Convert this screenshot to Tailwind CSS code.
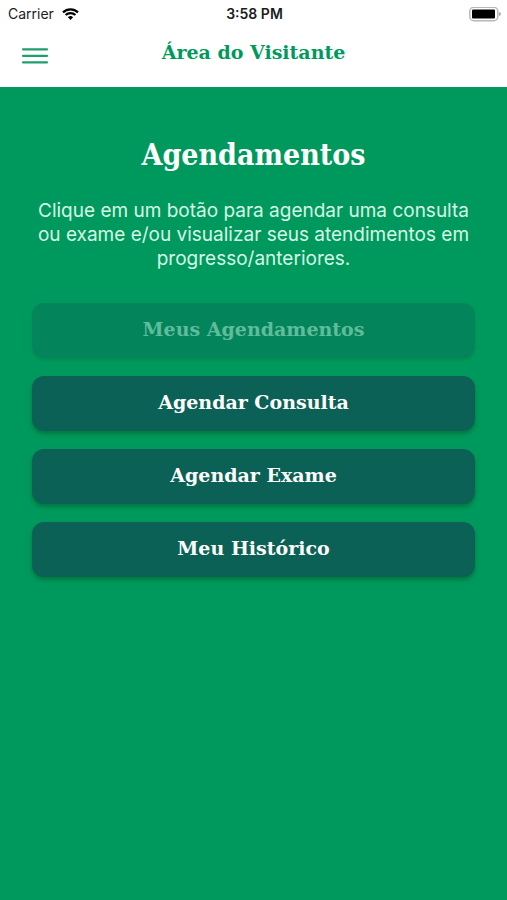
<!DOCTYPE html>
<html lang="pt-BR">
  <head>
    <title>Área do Visitante</title>
    <meta charset="UTF-8" />
    <meta name="viewport" content="width=device-width, initial-scale=1" />
    <script src="https://cdn.jsdelivr.net/npm/@tailwindcss/browser@4"></script>
  </head>
  <body class="min-h-screen flex flex-col bg-[#00995d] font-['Inter','Liberation_Sans',sans-serif]">
    <header class="bg-white h-[87px]">
      <!-- Status bar -->
      <div class="grid grid-cols-3 items-center h-7 pl-2 pr-1.5 text-[#1c1c1c]">
        <div class="flex items-center gap-2 text-sm">
          <span>Carrier</span>
          <svg class="w-[17px] h-3" viewBox="0 0 17 12" fill="none" stroke="#000" stroke-width="2.2">
            <path d="M1 4.4a10.6 10.6 0 0 1 15 0" />
            <path d="M3.6 7.1a6.9 6.9 0 0 1 9.8 0" />
            <path d="M8.5 12L5.9 9.3a3.7 3.7 0 0 1 5.2 0z" fill="#000" stroke="none" />
          </svg>
        </div>
        <span class="text-sm font-semibold text-center">3:58 PM</span>
        <svg class="w-8 h-[15px] justify-self-end" viewBox="0 0 32 15">
          <rect x="0.8" y="0.3" width="28" height="13.4" rx="4" fill="#fff" stroke="#b8b8b8" stroke-width="1.5" />
          <rect x="3" y="2.5" width="23" height="9" rx="1" fill="#000" />
          <path d="M30.4 5c1.6.6 1.6 3.4 0 4z" fill="#777" />
        </svg>
      </div>
      <!-- Nav bar -->
      <div class="grid grid-cols-[1fr_auto_1fr] items-start px-[22px]">
        <button type="button" aria-label="Menu" class="justify-self-start mt-5">
          <svg class="w-[26px] h-4" viewBox="0 0 26 16" stroke="#1f9f6f" stroke-width="2.2" stroke-linecap="round">
            <path d="M1 1.3h24M1 7.8h24M1 14.3h24" />
          </svg>
        </button>
        <h1 class="mt-3 text-[19px] leading-6 font-bold text-[#00995d] font-['DejaVu_Serif',serif]">Área do Visitante</h1>
      </div>
    </header>

    <main class="flex-1 px-8 pt-12 text-center">
      <h2 class="text-[30px] leading-10 font-bold text-white font-['DejaVu_Serif_Condensed','DejaVu_Serif',serif]">Agendamentos</h2>
      <p class="mt-6 text-[19px] leading-6 text-[#d5f7e6]">Clique em um botão para agendar uma consulta ou exame e/ou visualizar seus atendimentos em progresso/anteriores.</p>
      <div class="mt-8 flex flex-col gap-[18px] text-[19px] font-bold text-white font-['DejaVu_Serif',serif]">
        <button type="button" disabled class="h-[55px] pb-0.5 rounded-xl bg-[#04845a] text-[#5fbd9b] shadow-[0_2px_3px_#008c50]">Meus Agendamentos</button>
        <button type="button" class="h-[55px] pb-0.5 rounded-xl bg-[#0b6156] shadow-[0_3px_4px_#00783f]">Agendar Consulta</button>
        <button type="button" class="h-[55px] pb-0.5 rounded-xl bg-[#0b6156] shadow-[0_3px_4px_#00783f]">Agendar Exame</button>
        <button type="button" class="h-[55px] pb-0.5 rounded-xl bg-[#0b6156] shadow-[0_3px_4px_#00783f]">Meu Histórico</button>
      </div>
    </main>
  </body>
</html>
